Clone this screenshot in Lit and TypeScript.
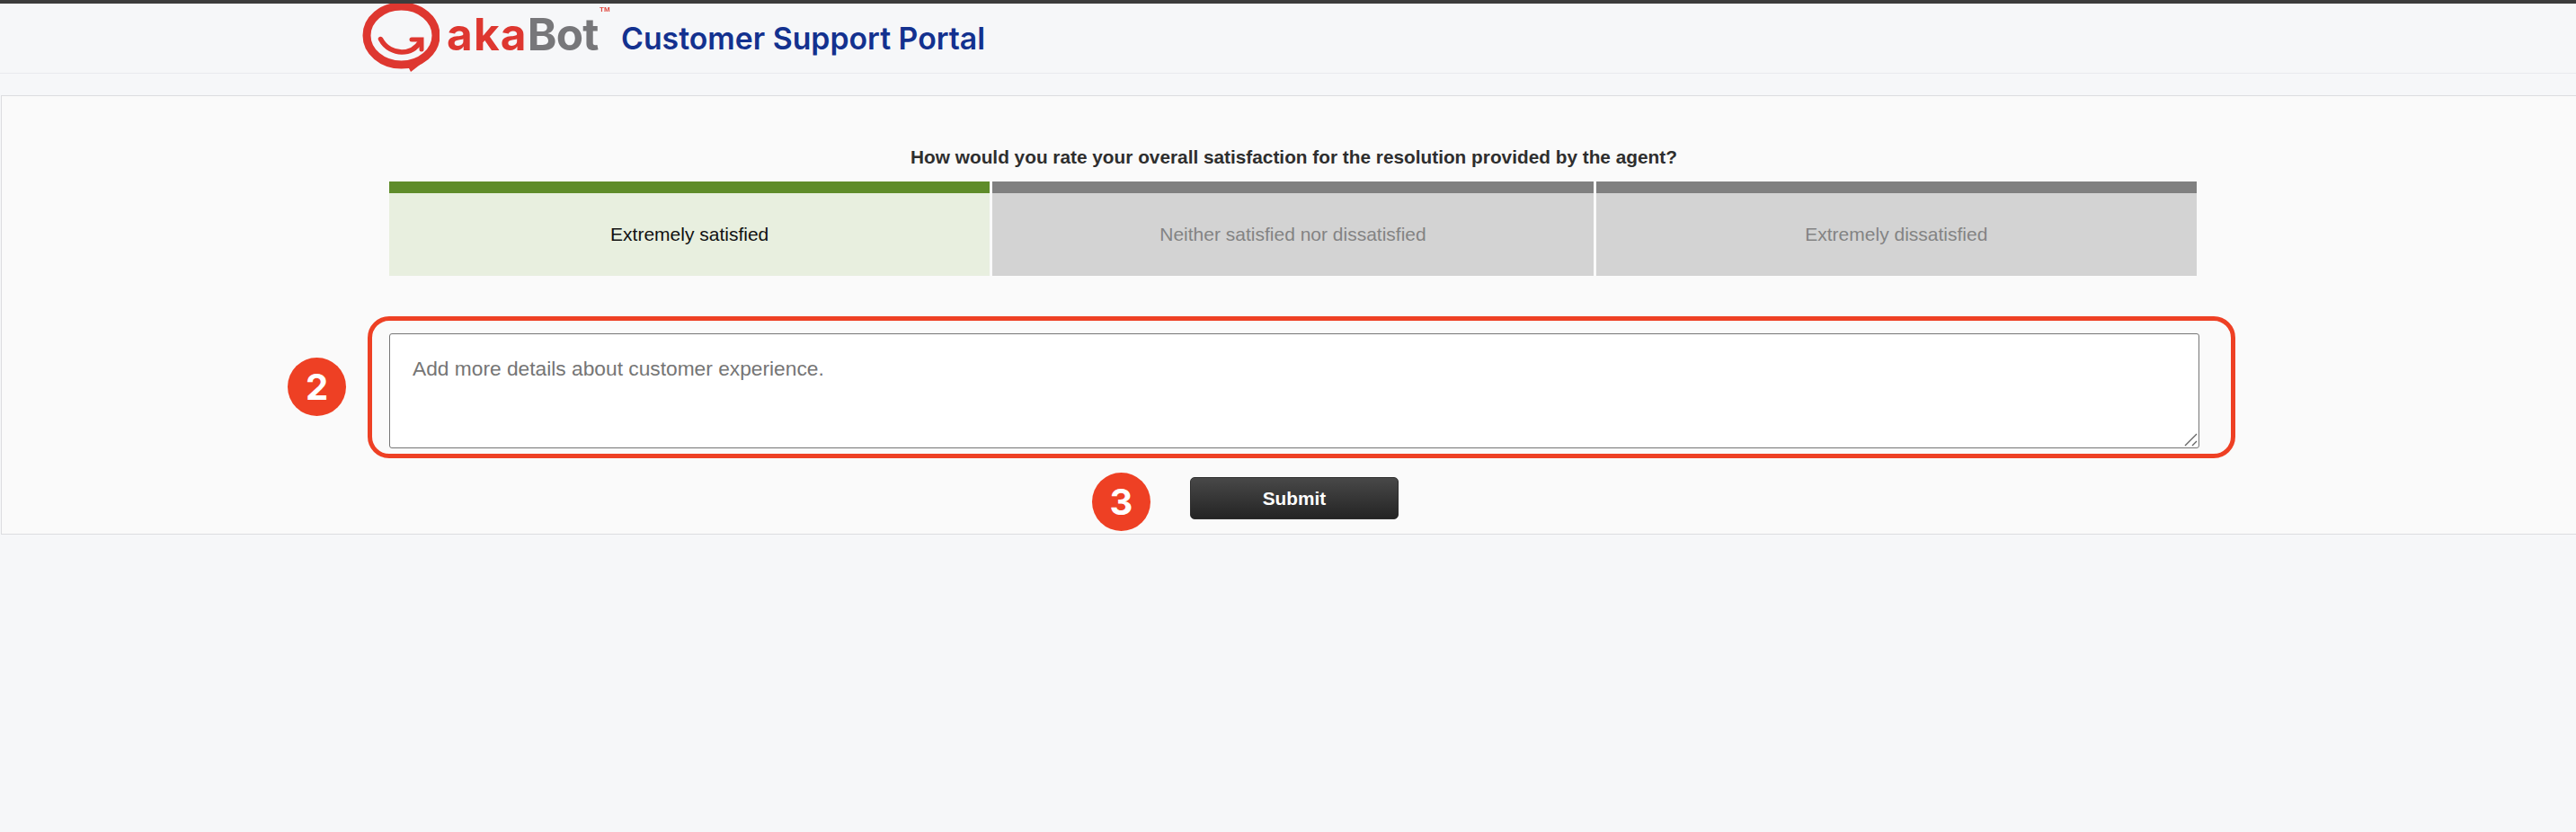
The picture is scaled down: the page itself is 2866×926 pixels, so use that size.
import { css, html, LitElement } from "lit";
import { customElement } from "lit/decorators.js";
import { classMap } from "lit/directives/class-map.js";

const OPTIONS = [
  { label: "Extremely satisfied", active: true },
  { label: "Neither satisfied nor dissatisfied", active: false },
  { label: "Extremely dissatisfied", active: false },
];

@customElement("app-root")
export class AppRoot extends LitElement {
  static styles = css`
    :host {
      display: block;
      position: relative;
      min-height: 100vh;
      background: #f6f7f9;
      font-family: "Liberation Sans", Arial, sans-serif;
    }

    .header {
      display: flex;
      align-items: flex-start;
      box-sizing: border-box;
      height: 82px;
      padding-left: 403px;
      border-top: 4px solid #3c3c3c;
      border-bottom: 1px solid #e9eaee;
    }

    .logo {
      position: relative;
      display: flex;
      align-items: flex-start;
      width: 288px;
      filter: blur(0.6px);
    }

    .logo svg {
      display: block;
      flex: none;
    }

    .word {
      margin: 4px 0 0 8px;
      font: 700 49.5px/60px Inter, sans-serif;
      white-space: nowrap;
    }

    .aka {
      color: #de3730;
      letter-spacing: 1.2px;
    }

    .bot {
      color: #77777a;
      letter-spacing: -0.8px;
    }

    .tm {
      position: absolute;
      left: 264px;
      top: 3px;
      color: #e0483f;
      font: 700 8px/8px "Liberation Sans", sans-serif;
    }

    .title {
      margin: 19px 0 0;
      color: #13318f;
      font: 600 33.8px/40px Inter, sans-serif;
      white-space: nowrap;
    }

    .panel {
      display: flex;
      flex-direction: column;
      box-sizing: border-box;
      height: 489px;
      margin: 24px 0 0 1px;
      padding: 54px 0 0 431px;
      background: #fafafa;
      border: 1px solid #dcdde0;
      border-right: none;
    }

    .question {
      width: 2013px;
      margin: 0 0 14px;
      color: #2e2e2e;
      font-size: 20.8px;
      font-weight: 700;
      line-height: 27px;
      text-align: center;
    }

    .scale {
      display: grid;
      grid-template-columns: repeat(3, 1fr);
      gap: 3px;
      width: 2011px;
    }

    .option {
      display: flex;
      align-items: center;
      justify-content: center;
      box-sizing: border-box;
      height: 105px;
      padding-bottom: 1px;
      background: #d3d3d3;
      border-top: 13px solid #808080;
      color: #838383;
      font-size: 21px;
    }

    .option.active {
      background: #e8efdf;
      border-top-color: #5f8c2a;
      color: #111;
    }

    .field {
      position: relative;
      width: 2014px;
      height: 128px;
      margin-top: 64px;
    }

    textarea {
      display: block;
      box-sizing: border-box;
      width: 100%;
      height: 100%;
      padding: 24px 25px;
      background: #fff;
      border: 1px solid #767676;
      border-radius: 3px;
      outline: none;
      resize: none;
      font: 400 22.75px/28px "Liberation Sans", sans-serif;
    }

    textarea::placeholder {
      color: #757575;
    }

    .grip {
      position: absolute;
      right: 2px;
      bottom: 1px;
      pointer-events: none;
    }

    .submit {
      align-self: flex-start;
      box-sizing: border-box;
      width: 232px;
      height: 47px;
      margin: 32px 0 0 891px;
      padding: 0;
      background: linear-gradient(to bottom, #484848, #242424);
      border: 1px solid #2e2e2e;
      border-radius: 5px;
      color: #fff;
      font: 700 20.8px "Liberation Sans", sans-serif;
    }

    .frame {
      position: absolute;
      left: 409px;
      top: 352px;
      box-sizing: border-box;
      width: 2078px;
      height: 158px;
      border: 5px solid #ee4024;
      border-radius: 24px;
    }

    .badge {
      position: absolute;
      display: flex;
      align-items: center;
      justify-content: center;
      width: 65px;
      height: 65px;
      background: #ee4024;
      border-radius: 50%;
      color: #fff;
      font: 700 40px Inter, sans-serif;
    }

    .badge.two {
      left: 320px;
      top: 398px;
    }

    .badge.three {
      left: 1215px;
      top: 526px;
    }
  `;

  render() {
    return html`
      <header class="header">
        <div class="logo">
          <svg width="86" height="76" viewBox="0 0 86 76" fill="none">
            <ellipse cx="43.5" cy="35.5" rx="38.5" ry="32.5" stroke="#de3730" stroke-width="9"></ellipse>
            <polygon points="50,68 72,62 54,76" fill="#de3730"></polygon>
            <path d="M20.5 39.5C26 50 36 54 44 54C53 54 60 50 65 42" stroke="#de3730" stroke-width="5.5" stroke-linecap="round"></path>
            <polyline points="55,40 66,40 66,51" stroke="#de3730" stroke-width="5" stroke-linecap="round"></polyline>
          </svg>
          <div class="word"><span class="aka">aka</span><span class="bot">Bot</span></div>
          <span class="tm">TM</span>
        </div>
        <h1 class="title">Customer Support Portal</h1>
      </header>
      <main class="panel">
        <p class="question">How would you rate your overall satisfaction for the resolution provided by the agent?</p>
        <div class="scale">
          ${OPTIONS.map(
            (o) => html`<div class=${classMap({ option: true, active: o.active })}>${o.label}</div>`
          )}
        </div>
        <div class="field">
          <textarea placeholder="Add more details about customer experience."></textarea>
          <svg class="grip" width="16" height="16" viewBox="0 0 16 16" fill="none" stroke="#666" stroke-width="1.4">
            <path d="M15 1L2 14M15 9L10 14"></path>
          </svg>
        </div>
        <button class="submit">Submit</button>
      </main>
      <div class="frame"></div>
      <div class="badge two">2</div>
      <div class="badge three">3</div>
    `;
  }
}
